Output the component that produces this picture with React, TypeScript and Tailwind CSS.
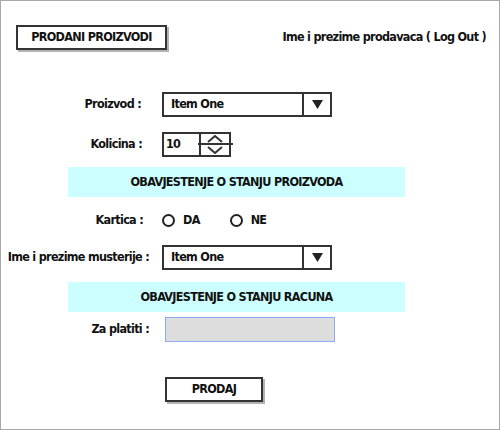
const font = "font-['DejaVu_Sans_Condensed','DejaVu_Sans',sans-serif] font-bold";

function Dropdown() {
  return (
    <div className="flex h-[25px] w-[170px] border-2 border-[#333] bg-white">
      <div className="flex flex-1 items-center pl-[7px]">Item One</div>
      <div className="flex w-[28px] items-center justify-center border-l-2 border-[#333]">
        <svg width="11" height="9" viewBox="0 0 11 9">
          <path d="M0 0 L11 0 L5.5 9 Z" fill="#222" />
        </svg>
      </div>
    </div>
  );
}

function Stepper() {
  return (
    <div className="relative flex h-[25px] w-[69px] border-2 border-[#333] bg-white">
      <div className="flex w-[37px] items-center border-r-2 border-[#333] pl-[2px]">10</div>
      <div className="flex flex-1 flex-col items-center justify-around">
        <svg width="16" height="8" viewBox="0 0 16 8">
          <path d="M1 7 L8 1 L15 7" fill="none" stroke="#333" strokeWidth="2" />
        </svg>
        <svg width="16" height="8" viewBox="0 0 16 8">
          <path d="M1 1 L8 7 L15 1" fill="none" stroke="#333" strokeWidth="2" />
        </svg>
      </div>
      <div className="absolute left-[34px] right-[-4px] top-[9px] h-[2px] bg-[#333]" />
    </div>
  );
}

function Radio({ label }: { label: string }) {
  return (
    <div className="flex items-center gap-[8px]">
      <span className="h-[13px] w-[13px] rounded-full border-[2.5px] border-[#222]" />
      <span>{label}</span>
    </div>
  );
}

function Banner({ text }: { text: string }) {
  return (
    <div className="ml-[67px] flex h-[30px] w-[337px] items-center justify-center bg-[#ccffff]">
      {text}
    </div>
  );
}

export default function App() {
  return (
    <div className={`flex h-[430px] w-[500px] flex-col border border-[#a8a8a8] bg-white text-[12.5px] tracking-[-0.7px] text-[#111] ${font}`}>
      {/* header */}
      <div className="mt-[24px] flex items-center justify-between pl-[15px] pr-[13px]">
        <button className="flex h-[25px] w-[151px] items-center justify-center border-2 border-[#333] bg-white shadow-[2px_2px_0_rgba(0,0,0,0.3)]">
          PRODANI PROIZVODI
        </button>
        <span>Ime i prezime prodavaca ( Log Out )</span>
      </div>

      <div className="mt-[42px] flex items-center">
        <span className="w-[161px] pr-[21px] text-right">Proizvod :</span>
        <Dropdown />
      </div>

      <div className="mt-[15px] flex items-center">
        <span className="w-[161px] pr-[20px] text-right">Kolicina :</span>
        <Stepper />
      </div>

      <div className="mt-[10px]">
        <Banner text="OBAVJESTENJE O STANJU PROIZVODA" />
      </div>

      <div className="mt-[13px] flex h-[20px] items-center">
        <span className="w-[161px] pr-[19px] text-right">Kartica :</span>
        <div className="flex items-center gap-[30px]">
          <Radio label="DA" />
          <Radio label="NE" />
        </div>
      </div>

      <div className="mt-[15px] flex items-center">
        <span className="w-[161px] pr-[13px] text-right">Ime i prezime musterije :</span>
        <Dropdown />
      </div>

      <div className="mt-[12px]">
        <Banner text="OBAVJESTENJE O STANJU RACUNA" />
      </div>

      <div className="mt-[5px] flex items-center">
        <span className="w-[164px] pr-[16px] text-right">Za platiti :</span>
        <input
          readOnly
          className="h-[25px] w-[170px] border border-[#8eabf5] bg-[#dddddd] outline-none"
        />
      </div>

      <div className="mt-[35px] pl-[164px]">
        <button className="flex h-[25px] w-[98px] items-center justify-center border-2 border-[#333] bg-white shadow-[2px_2px_0_rgba(0,0,0,0.3)]">
          PRODAJ
        </button>
      </div>
    </div>
  );
}
